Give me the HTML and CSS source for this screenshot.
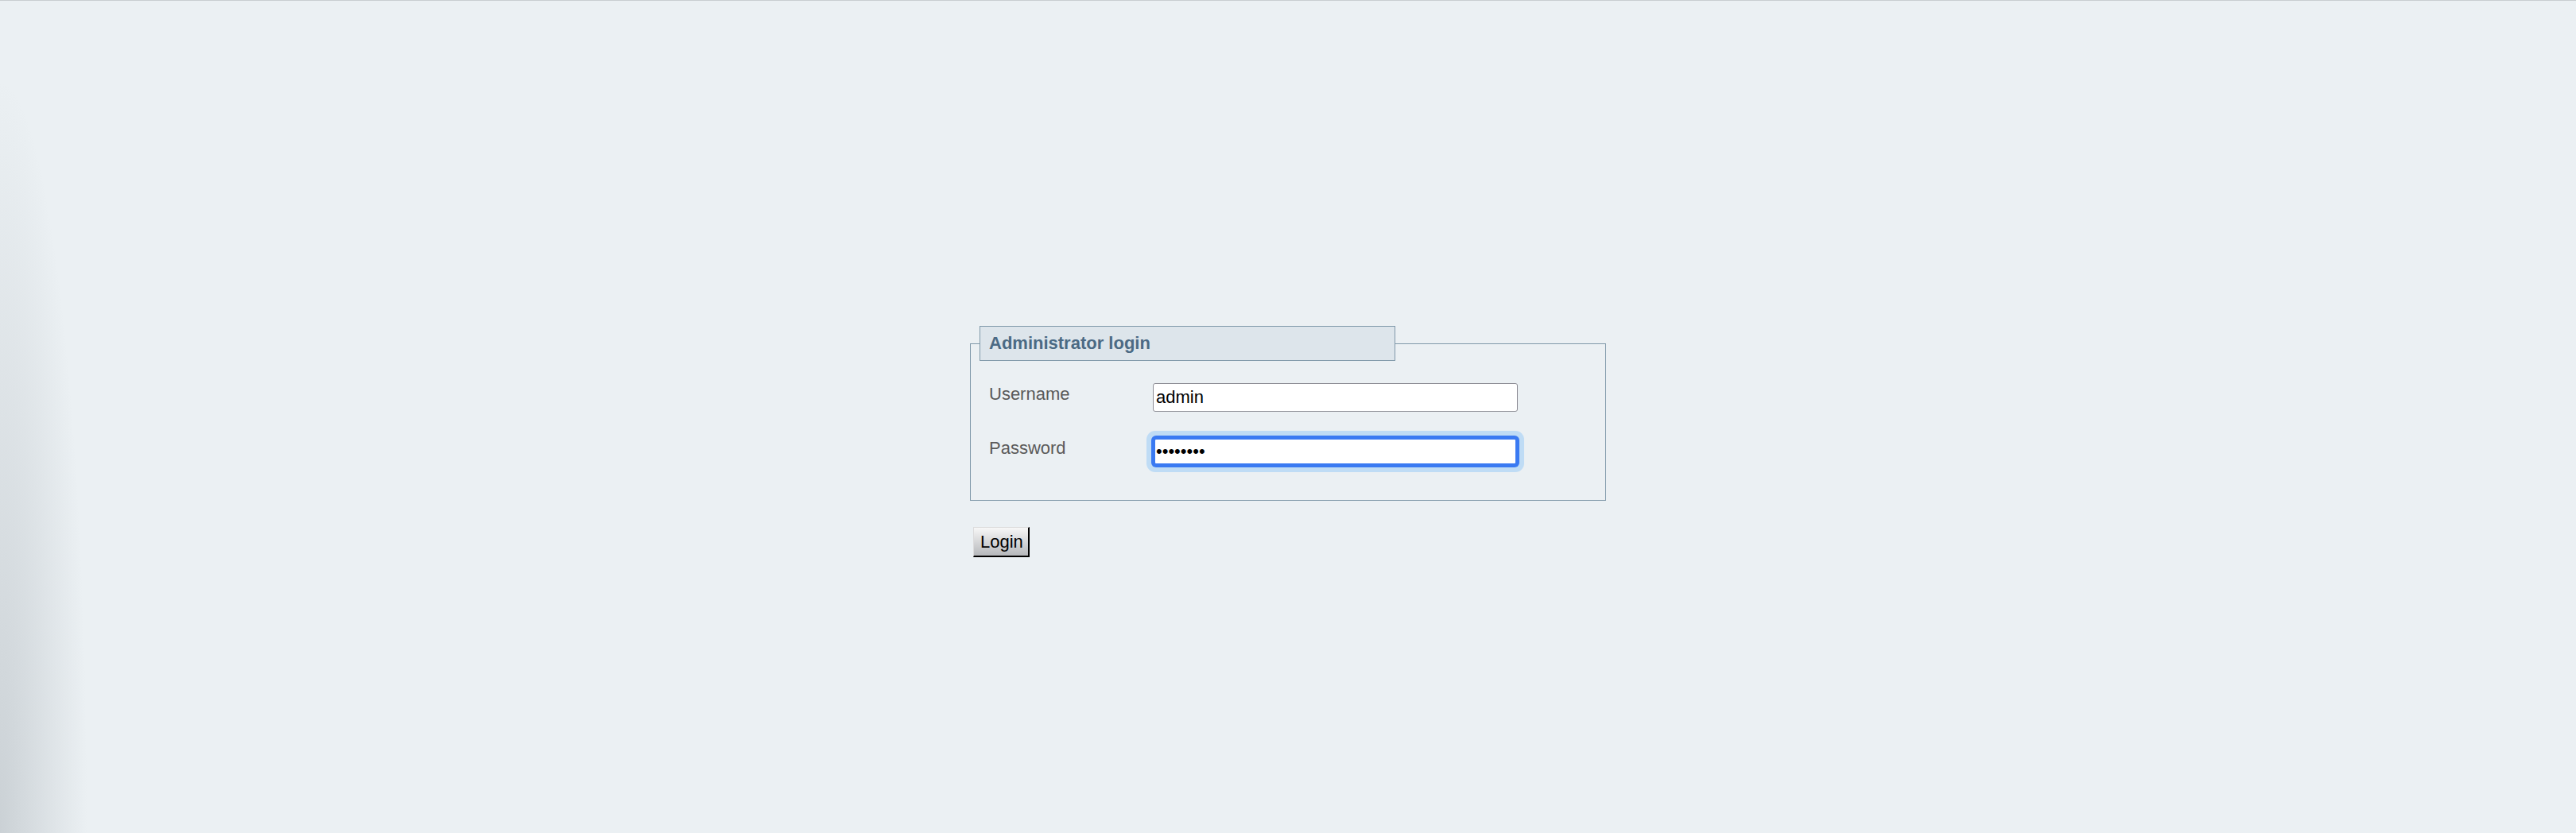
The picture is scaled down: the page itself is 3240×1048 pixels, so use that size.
FILE: index.html
```html
<!DOCTYPE html>
<html lang="en">
<head>
<meta charset="utf-8">
<title>Administrator login</title>
<link rel="stylesheet" href="styles.css">
</head>
<body>
<div class="page">
  <form class="login" action="#" onsubmit="return false;">
    <fieldset class="box">
      <legend class="title">Administrator login</legend>
      <div class="row">
        <label class="label" for="user">Username</label>
        <input class="field" id="user" type="text" value="admin">
      </div>
      <div class="row">
        <label class="label" for="pass">Password</label>
        <input class="field is-focused" id="pass" type="password" value="password">
      </div>
    </fieldset>
    <div class="actions">
      <button class="btn" type="submit">Login</button>
    </div>
  </form>
</div>
</body>
</html>
```

FILE: styles.css
```css
html, body {
  margin: 0;
  padding: 0;
  height: 100%;
}

body {
  font-family: "Liberation Sans", Arial, Helvetica, sans-serif;
  background-color: #ebf0f3;
  background-image: radial-gradient(ellipse 110px 950px at 0% 100%, rgba(110, 120, 128, 0.26), rgba(110, 120, 128, 0) 100%);
  background-repeat: no-repeat;
  border-top: 1px solid #c9cdd0;
  box-sizing: border-box;
}

.page {
  display: flex;
  justify-content: center;
  padding-top: 409px;
}

.login {
  width: 800px;
}

.box {
  margin: 0;
  padding: 0 12px 43px 11px;
  border: 1px solid #7f98a9;
}

.title {
  box-sizing: border-box;
  width: 523px;
  height: 44px;
  line-height: 42px;
  padding: 0 11px;
  margin: 0;
  background: #dde5eb;
  border: 1px solid #7f98a9;
  color: #4b6a84;
  font-size: 22px;
  font-weight: bold;
}

.row {
  display: flex;
  align-items: flex-start;
  margin-top: 28px;
}

.row + .row {
  margin-top: 32px;
}

.label {
  width: 206px;
  margin-left: 12px;
  padding-top: 1px;
  line-height: 26px;
  font-size: 22px;
  color: #5a5a5a;
}

.field {
  box-sizing: border-box;
  width: 459px;
  height: 36px;
  padding: 0 3px;
  margin: 0;
  border: 1px solid #8e8e96;
  border-radius: 3px;
  background: #fff;
  color: #000;
  font-family: "Liberation Sans", Arial, Helvetica, sans-serif;
  font-size: 22px;
}

.field:focus {
  outline: none;
}

.is-focused {
  border: 3px solid #3a7af2;
  border-radius: 4px;
  padding: 0 1px;
  box-shadow: 0 0 0 2px #3a7af2, 0 0 0 8px #bfdcf5;
  font-size: 22px;
}

.actions {
  margin-top: 33px;
  padding-left: 4px;
}

.btn {
  box-sizing: border-box;
  height: 38px;
  padding: 0 6px 0 8px;
  margin: 0;
  border-style: solid;
  border-width: 1px 2px 2px 1px;
  border-color: #dcdcdc #000 #000 #dcdcdc;
  background: linear-gradient(to bottom, #f7f7f7, #b6b8bb);
  color: #000;
  font-family: "Liberation Sans", Arial, Helvetica, sans-serif;
  font-size: 22px;
  line-height: 34px;
}
```
